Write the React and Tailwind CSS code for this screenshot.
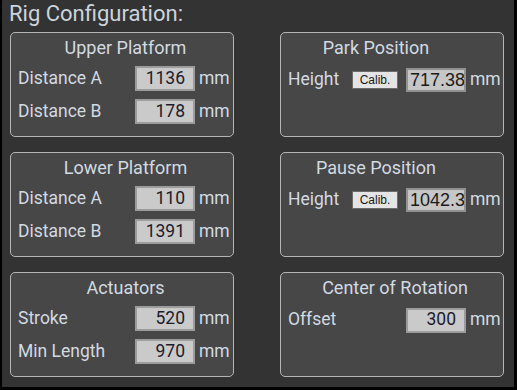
import React from "react";

const font = { fontFamily: "Roboto, 'DejaVu Sans', sans-serif" };

function Field({ value }) {
  return (
    <div className="w-[60px] h-[25px] bg-[#cacaca] border-2 border-[#9c9c9c] flex items-center justify-end pr-[8px] text-[17.5px] text-[#1c1c2c] leading-none">
      {value}
    </div>
  );
}

function LeftRow({ label, value }) {
  return (
    <div className="flex items-center h-[25px]">
      <div className="w-[124px] pl-[7px] text-[17.5px] text-[#d2dae2] leading-none">{label}</div>
      <Field value={value} />
      <div className="ml-[4px] text-[17.5px] text-[#d2dae2] leading-none">mm</div>
    </div>
  );
}

function LeftPanel({ title, rows }) {
  return (
    <div className="w-[224px] h-[105px] bg-[#474747] border border-[#b4b4b4] rounded-[5px] flex flex-col">
      <div className="mt-[4px] h-[22px] pl-[7px] text-center text-[18px] text-[#d2dae2] leading-[22px]">{title}</div>
      <div className="mt-[7px] flex flex-col gap-[8px]">
        {rows.map((r) => (
          <LeftRow key={r[0]} label={r[0]} value={r[1]} />
        ))}
      </div>
    </div>
  );
}

function RightPanel({ title, titleCls, value, calib }) {
  return (
    <div className="w-[224px] h-[105px] bg-[#474747] border border-[#b4b4b4] rounded-[5px] flex flex-col">
      <div className={"mt-[4px] h-[22px] text-center text-[18px] text-[#d2dae2] leading-[22px] " + titleCls}>{title}</div>
      <div className="mt-[9px] flex items-center h-[24px]">
        <div className="w-[71px] pl-[7px] text-[17.5px] text-[#d2dae2] leading-none">{calib ? "Height" : "Offset"}</div>
        <div className="w-[54px]">
          {calib && (
            <div
              className="w-[46px] h-[18px] bg-[#e4e4e4] border border-[#6c6c6c] flex items-center justify-center text-[12px] text-[#1a1a1a] leading-none"
              style={{ fontFamily: "'Liberation Sans', Arial, sans-serif" }}
            >
              Calib.
            </div>
          )}
        </div>
        {calib ? (
          <input
            readOnly
            value={value}
            className="w-[60px] h-[24px] bg-[#c6c6c6] border-2 border-[#929292] pl-[2px] pr-0 text-[18px] text-[#1a1a1a] leading-none outline-none"
            style={{ fontFamily: "'Liberation Sans', Arial, sans-serif" }}
          />
        ) : (
          <Field value={value} />
        )}
        <div className="ml-[4px] text-[17.5px] text-[#d2dae2] leading-none">mm</div>
      </div>
    </div>
  );
}

export default function App() {
  return (
    <div className="w-[517px] h-[390px] bg-black" style={font}>
      <div className="ml-[2px] mr-[3px] h-[387px] bg-[#333333] flex flex-col">
        <div className="h-[32px] pl-[7px] pt-[1px] text-[22px] leading-[26px] text-[#ccd4dc]">Rig Configuration:</div>
        <div className="grid grid-cols-[224px_224px] gap-x-[46px] gap-y-[15px] pl-[8px]">
          <LeftPanel title="Upper Platform" rows={[["Distance A", "1136"], ["Distance B", "178"]]} />
          <RightPanel title="Park Position" titleCls="pr-[32px]" value="717.38" calib />
          <LeftPanel title="Lower Platform" rows={[["Distance A", "110"], ["Distance B", "1391"]]} />
          <RightPanel title="Pause Position" titleCls="pr-[32px]" value="1042.38" calib />
          <LeftPanel title="Actuators" rows={[["Stroke", "520"], ["Min Length", "970"]]} />
          <RightPanel title="Center of Rotation" titleCls="pl-[6px]" value="300" />
        </div>
      </div>
    </div>
  );
}
